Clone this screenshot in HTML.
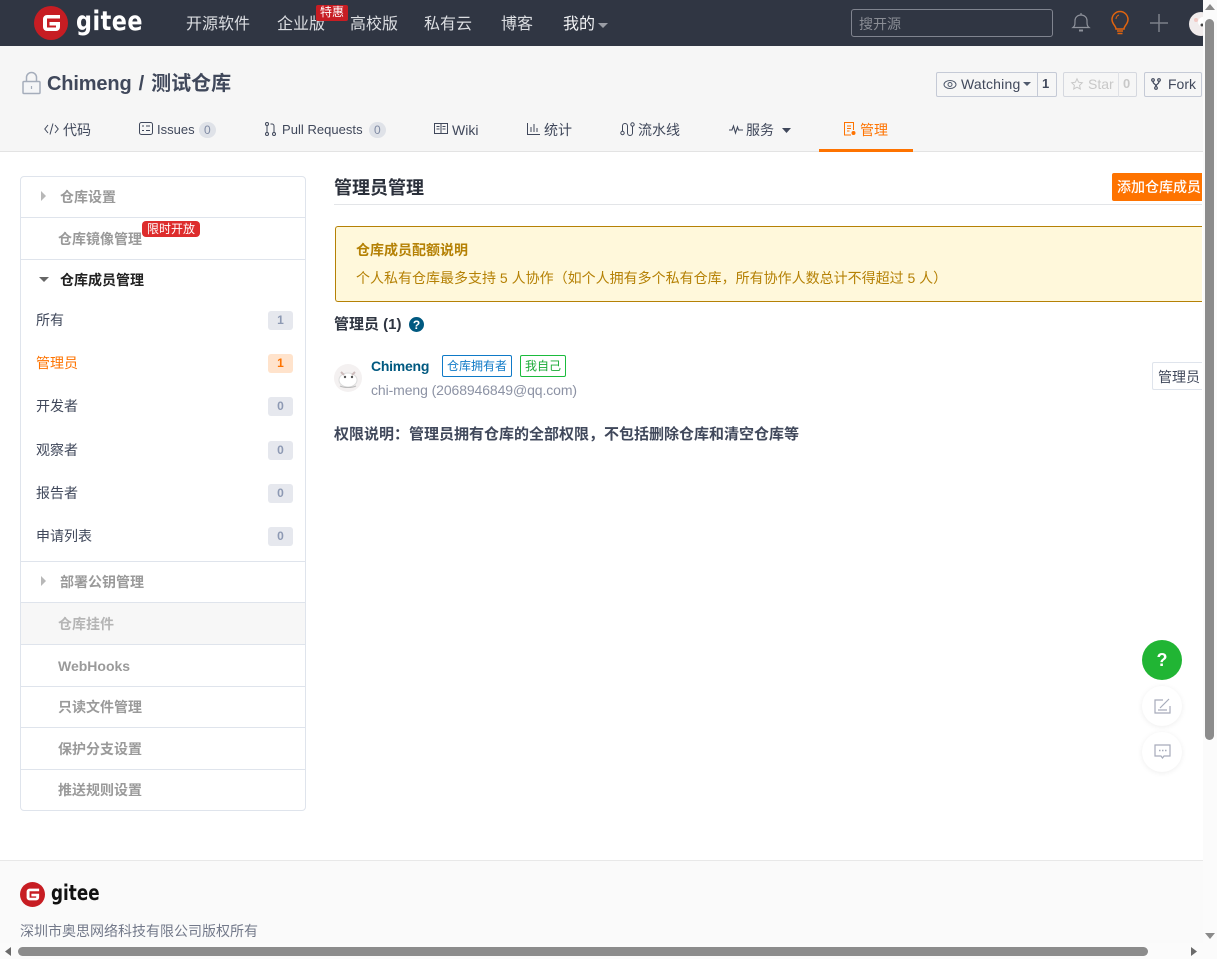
<!DOCTYPE html>
<html lang="zh"><head><meta charset="utf-8"><title>管理员管理</title>
<style>
html,body{margin:0;padding:0;width:1217px;height:959px;overflow:hidden;background:#fff}
body{position:relative;font-family:"Liberation Sans","Noto Sans CJK SC",sans-serif;font-size:14px;color:#40485b}
.a{position:absolute;white-space:nowrap}
.t{line-height:20px}
.nav{top:14px;font-size:16px;line-height:22px;color:#dcdee2}
.tab{top:120px;font-size:14px;line-height:20px;color:#40485b}
.cnt{display:inline-block;background:#dfe2e8;color:#7f8aa3;border-radius:9px;font-size:12px;line-height:16px;padding:0 5px}
.gr{color:#9a9a9a;font-weight:bold;font-size:14px;left:58px}
.row{left:21px;width:284px;height:1px;background:#dfe4ec}
.sub{left:36px;font-size:14px;color:#40485b}
.bd{left:268px;width:25px;height:19px;border-radius:3px;background:#e6e8ee;color:#8d99b3;font-weight:bold;font-size:12px;line-height:19px;text-align:center}
.btn{height:25px;top:72px;box-sizing:border-box;border:1px solid #c5cad6;border-radius:2px;line-height:23px;font-size:14px;background:#f6f6f6}
svg{position:absolute;overflow:visible}
</style></head><body>

<div class="a" style="left:0;top:0;width:1217px;height:46px;background:#303643"></div>
<div class="a" style="left:0;top:46px;width:1217px;height:105px;background:#f6f6f6;border-bottom:1px solid #e3e3e3;box-sizing:content-box"></div>

<!-- header logo -->
<svg style="left:34px;top:6px" width="34" height="34" viewBox="0 0 34 34"><circle cx="17" cy="17" r="17" fill="#c71d23"/><path d="M26 9H13a4 4 0 0 0-4 4v8a4 4 0 0 0 4 4h9a4 4 0 0 0 4-4v-5H15.500v3.500H22V21.500H13V12.500H26z" fill="#fff"/></svg>
<div class="a" style="left:76px;top:4px;font-size:27px;line-height:36px;font-weight:bold;color:#fff;letter-spacing:.6px;font-family:'DejaVu Sans',sans-serif;transform:scaleX(.825);transform-origin:0 0">gitee</div>

<div class="a nav" style="left:186px">开源软件</div>
<div class="a nav" style="left:277px">企业版</div>
<div class="a" style="left:316px;top:5px;width:32px;height:16px;background:#c71d23;border-radius:2px;color:#fff;font-size:12px;line-height:15px;text-align:center">特惠</div>
<div class="a nav" style="left:350px">高校版</div>
<div class="a nav" style="left:424px">私有云</div>
<div class="a nav" style="left:501px">博客</div>
<div class="a nav" style="left:563px;color:#f2f3f5">我的</div>
<svg style="left:598px;top:23px" width="10" height="5"><path d="M0 0h10L5 5z" fill="#9a9da5"/></svg>

<div class="a" style="left:851px;top:9px;width:202px;height:28px;box-sizing:border-box;border:1px solid #80848f;border-radius:3px;color:#8a8d95;font-size:14px;line-height:28px;padding-left:7px">搜开源</div>

<svg style="left:1071px;top:11px" width="20" height="24" fill="none" stroke="#8e929b" stroke-width="1.200"><path d="M2 16.500c2-1.500 2-3 2-7 0-3 2.500-5.500 6-5.500s6 2.500 6 5.500c0 4 0 5.500 2 7z"/><path d="M10 2v2"/><path d="M8 19.500h4" stroke-width="2"/></svg>
<svg style="left:1110px;top:11px" width="20" height="26" fill="none" stroke="#e0640f" stroke-width="1.500"><path d="M6 18c0-3-4-5-4-9.500a8 8 0 0 1 16 0C18 13 14 15 14 18z"/><path d="M7 20h6M7.500 22.500h5" stroke-width="1.500"/><path d="M6 8c0-2 1.500-3.500 3-4" stroke-width="1"/></svg>
<svg style="left:1150px;top:14px" width="18" height="18" stroke="#7c808a" stroke-width="1.500"><path d="M9 0v18M0 9h18"/></svg>
<svg style="left:1189px;top:12px" width="24" height="24"><circle cx="12" cy="12" r="12" fill="#f1ecec"/><circle cx="14" cy="10" r="5" fill="#fff"/><circle cx="13" cy="13" r="1.500" fill="#444"/><circle cx="7" cy="8" r="2" fill="#f2c9c4"/></svg>

<!-- repo title -->
<svg style="left:22px;top:72px" width="20" height="23" fill="none" stroke="#a5adbb" stroke-width="1.500"><rect x="1" y="9.500" width="17" height="12" rx="1" fill="#f4f5f7"/><path d="M4.500 9.500V5.500a5 5 0 0 1 10 0v4"/><path d="M9.500 14v3" stroke-width="1.200"/></svg>
<div class="a" style="left:47px;top:71px;font-size:20px;line-height:27px;font-weight:bold;color:#40485b;word-spacing:1.500px"><span style="letter-spacing:-.15px">Chimeng</span> / 测试仓库</div>

<!-- repo buttons -->
<div class="a btn" style="left:936px;width:121px"></div>
<div class="a" style="left:1037px;top:72px;width:1px;height:25px;background:#c5cad6"></div>
<svg style="left:943px;top:79px" width="14" height="11" fill="none" stroke="#505a6d" stroke-width="1"><ellipse cx="7" cy="5.500" rx="6" ry="4"/><circle cx="7" cy="5.500" r="2"/></svg>
<div class="a t" style="left:961px;top:74px;color:#40485b;letter-spacing:.2px">Watching</div>
<svg style="left:1023px;top:82px" width="8" height="4"><path d="M0 0h8L4 4z" fill="#505a6d"/></svg>
<div class="a t" style="left:1042px;top:74px;font-weight:bold;color:#40485b;font-size:13px">1</div>

<div class="a btn" style="left:1063px;width:74px;border-color:#d5d8df"></div>
<div class="a" style="left:1118px;top:72px;width:1px;height:25px;background:#dfe1e6"></div>
<svg style="left:1071px;top:78px" width="12" height="12" fill="none" stroke="#c8c8c8" stroke-width="1"><path d="M6 .8l1.600 3.400 3.700.5-2.700 2.600.7 3.700L6 9.200 2.700 11l.7-3.700L.7 4.700l3.700-.5z"/></svg>
<div class="a t" style="left:1088px;top:74px;color:#c8c8c8">Star</div>
<div class="a t" style="left:1123px;top:74px;font-weight:bold;color:#c8c8c8;font-size:13px">0</div>

<div class="a btn" style="left:1144px;width:58px"></div>
<svg style="left:1151px;top:78px" width="10" height="12" fill="none" stroke="#40485b" stroke-width="1.200"><circle cx="2" cy="2" r="1.300"/><circle cx="8" cy="2" r="1.300"/><circle cx="5" cy="10" r="1.300"/><path d="M2 3.500c0 3 3 2 3 5M8 3.500c0 3-3 2-3 5"/></svg>
<div class="a t" style="left:1168px;top:74px;color:#40485b">Fork</div>

<!-- tabs -->
<svg style="left:44px;top:123px" width="15" height="12" fill="none" stroke="#40485b" stroke-width="1"><path d="M4 2L.8 6 4 10M11 2l3.200 4L11 10M9 .5L6 11.500"/></svg>
<div class="a tab" style="left:63px">代码</div>
<svg style="left:139px;top:122px" width="14" height="13" fill="none" stroke="#40485b" stroke-width="1"><rect x=".5" y=".5" width="13" height="12" rx="2"/><path d="M3 4h2M7 4h4M3 8.500h2M7 8.500h4"/></svg>
<div class="a tab" style="left:157px;font-size:13px">Issues</div>
<div class="a cnt" style="left:199px;top:122px">0</div>
<svg style="left:265px;top:122px" width="11" height="14" fill="none" stroke="#40485b" stroke-width="1"><circle cx="2" cy="2" r="1.500"/><circle cx="2" cy="12" r="1.500"/><circle cx="9" cy="12" r="1.500"/><path d="M2 3.500v7M9 10.500V4a2 2 0 0 0-2-2H5.500"/></svg>
<div class="a tab" style="left:282px;font-size:13px;letter-spacing:.03px">Pull Requests</div>
<div class="a cnt" style="left:369px;top:122px">0</div>
<svg style="left:434px;top:123px" width="14" height="11" fill="none" stroke="#40485b" stroke-width="1"><rect x=".5" y=".5" width="13" height="10"/><path d="M7 .5v10M2.500 3.500h3M2.500 6h3M8.500 3.500h3M8.500 6h3" /></svg>
<div class="a tab" style="left:452px">Wiki</div>
<svg style="left:527px;top:123px" width="13" height="12" fill="none" stroke="#40485b" stroke-width="1"><path d="M.5 0v11.500H13M4 4v5M7 1v8M10 5v4"/></svg>
<div class="a tab" style="left:544px">统计</div>
<svg style="left:620px;top:122px" width="15" height="14" fill="none" stroke="#40485b" stroke-width="1"><circle cx="2.500" cy="11" r="1.700"/><circle cx="12.500" cy="2.500" r="1.700"/><path d="M2.500 9V4a2.500 2.500 0 0 1 5 0v7a2.500 2.500 0 0 0 5 0V4.500"/></svg>
<div class="a tab" style="left:638px">流水线</div>
<svg style="left:729px;top:125px" width="14" height="9" fill="none" stroke="#40485b" stroke-width="1.100"><path d="M0 5h3l1.500-4 2 7 2-6 1 3H14"/></svg>
<div class="a tab" style="left:746px">服务</div>
<svg style="left:782px;top:128px" width="9" height="5"><path d="M0 0h9L4.500 5z" fill="#40485b"/></svg>
<svg style="left:844px;top:122px" width="12" height="14" fill="none" stroke="#fe7300" stroke-width="1"><path d="M7 13H.5V.5h9V8"/><path d="M3 4h4M3 6.500h4M3 9h2.500"/><circle cx="9.500" cy="11" r="1.500" fill="#fe7300"/></svg>
<div class="a tab" style="left:860px;color:#fe7300">管理</div>
<div class="a" style="left:819px;top:149px;width:94px;height:3px;background:#fe7300"></div>

<!-- sidebar -->
<div class="a" style="left:20px;top:176px;width:286px;height:635px;box-sizing:border-box;border:1px solid #dfe4ec;border-radius:4px;background:#fff"></div>
<div class="a" style="left:21px;top:603px;width:284px;height:41px;background:#f7f7f7"></div>
<svg style="left:41px;top:191px" width="5" height="10"><path d="M0 0l5 5-5 5z" fill="#b8b8b8"/></svg>
<div class="a t gr" style="left:60px;top:187px">仓库设置</div>
<div class="a row" style="top:217px"></div>
<div class="a t gr" style="top:229px">仓库镜像管理</div>
<div class="a" style="left:142px;top:221px;width:58px;height:16px;background:#dd2c2c;border-radius:4px;color:#fff;font-size:12px;line-height:16px;text-align:center">限时开放</div>
<div class="a row" style="top:259px"></div>
<svg style="left:39px;top:277px" width="10" height="5"><path d="M0 0h10L5 5z" fill="#666"/></svg>
<div class="a t" style="left:60px;top:270px;font-weight:bold;font-size:14px;color:#222">仓库成员管理</div>

<div class="a t sub" style="top:310px">所有</div><div class="a bd" style="top:311px">1</div>
<div class="a t sub" style="top:353px;color:#fe7300">管理员</div><div class="a bd" style="top:354px;background:#ffe3cc;color:#fe7300">1</div>
<div class="a t sub" style="top:396px">开发者</div><div class="a bd" style="top:397px">0</div>
<div class="a t sub" style="top:440px">观察者</div><div class="a bd" style="top:441px">0</div>
<div class="a t sub" style="top:483px">报告者</div><div class="a bd" style="top:484px">0</div>
<div class="a t sub" style="top:526px">申请列表</div><div class="a bd" style="top:527px">0</div>

<div class="a row" style="top:561px"></div>
<svg style="left:41px;top:576px" width="5" height="10"><path d="M0 0l5 5-5 5z" fill="#b8b8b8"/></svg>
<div class="a t gr" style="left:60px;top:572px">部署公钥管理</div>
<div class="a row" style="top:602px"></div>
<div class="a t gr" style="top:614px;color:#b5b5b5">仓库挂件</div>
<div class="a row" style="top:644px"></div>
<div class="a t gr" style="top:656px">WebHooks</div>
<div class="a row" style="top:686px"></div>
<div class="a t gr" style="top:697px">只读文件管理</div>
<div class="a row" style="top:727px"></div>
<div class="a t gr" style="top:739px">保护分支设置</div>
<div class="a row" style="top:769px"></div>
<div class="a t gr" style="top:780px">推送规则设置</div>

<!-- main -->
<div class="a" style="left:334px;top:176px;font-size:18px;line-height:25px;font-weight:bold;color:#2a2f3a">管理员管理</div>
<div class="a" style="left:334px;top:204px;width:868px;height:1px;background:#e3e5e8"></div>
<div class="a" style="left:1112px;top:173px;width:90px;height:28px;background:#fe7300;border-radius:2px 0 0 2px"></div>
<div class="a" style="left:1117px;top:173px;color:#fff;font-size:14px;line-height:28px;font-weight:500">添加仓库成员</div>

<div class="a" style="left:335px;top:226px;width:867px;height:76px;box-sizing:border-box;border:1px solid #b58105;border-right:0;border-radius:3px 0 0 3px;background:#fff8db"></div>
<div class="a t" style="left:356px;top:240px;font-size:14px;font-weight:bold;color:#b58105">仓库成员配额说明</div>
<div class="a t" style="left:356px;top:268px;font-size:14px;color:#b58105">个人私有仓库最多支持 5 人协作（如个人拥有多个私有仓库，所有协作人数总计不得超过 5 人）</div>

<div class="a t" style="left:334px;top:315px;font-size:15px;font-weight:bold;color:#2f3541">管理员 (1)</div>
<svg style="left:409px;top:317px" width="15" height="15"><circle cx="7.500" cy="7.500" r="7.500" fill="#005980"/><text x="7.500" y="12" text-anchor="middle" font-size="12" font-weight="bold" fill="#fff" font-family="Liberation Sans">?</text></svg>

<svg style="left:334px;top:364px" width="28" height="28"><circle cx="14" cy="14" r="14" fill="#f4f1f1"/><ellipse cx="14" cy="16" rx="9" ry="7" fill="#fff" stroke="#ddd"/><circle cx="11" cy="13" r="1.200" fill="#555"/><circle cx="18" cy="13" r="1.200" fill="#555"/><path d="M7 8l3 3M21 8l-3 3" stroke="#cbb" stroke-width="2"/><path d="M6 22c4 2 12 2 16 0" stroke="#bbb" fill="none"/></svg>
<div class="a t" style="left:371px;top:356px;font-size:14px;font-weight:bold;color:#005980;letter-spacing:-.25px">Chimeng</div>
<div class="a" style="left:442px;top:355px;width:70px;height:22px;box-sizing:border-box;border:1px solid #0f7ac7;border-radius:2px;color:#0f7ac7;font-size:12px;line-height:21px;text-align:center">仓库拥有者</div>
<div class="a" style="left:520px;top:355px;width:46px;height:22px;box-sizing:border-box;border:1px solid #1bbb3d;border-radius:2px;color:#1bab37;font-size:12px;line-height:21px;text-align:center">我自己</div>
<div class="a t" style="left:371px;top:380px;font-size:14px;color:#8c92a4;letter-spacing:-.1px">chi-meng (2068946849@qq.com)</div>
<div class="a" style="left:1152px;top:362px;width:50px;height:28px;box-sizing:border-box;border:1px solid #dfe4ec;border-right:0;border-radius:2px 0 0 2px;color:#40485b;font-size:14px;line-height:28px;padding-left:5px;background:#fff">管理员</div>

<div class="a t" style="left:334px;top:425px;font-size:15px;font-weight:bold;color:#40485b">权限说明：管理员拥有仓库的全部权限，不包括删除仓库和清空仓库等</div>

<!-- floating -->
<div class="a" style="left:1142px;top:640px;width:40px;height:40px;border-radius:50%;background:#21b534;color:#fff;font-size:18px;font-weight:bold;line-height:40px;text-align:center">?</div>
<div class="a" style="left:1142px;top:686px;width:40px;height:40px;border-radius:50%;background:#fff;box-shadow:0 1px 6px rgba(0,0,0,.07)"></div>
<svg style="left:1154px;top:698px" width="17" height="17" fill="none" stroke="#a6abba" stroke-width="1.200"><path d="M9 2H1v13h15V8"/><path d="M6 10l9-9M4 12h9" /></svg>
<div class="a" style="left:1142px;top:732px;width:40px;height:40px;border-radius:50%;background:#fff;box-shadow:0 1px 6px rgba(0,0,0,.07)"></div>
<svg style="left:1154px;top:744px" width="17" height="16" fill="none" stroke="#a6abba" stroke-width="1.200"><path d="M1 1h15v11h-6l-1.500 2L7 12H1z"/><path d="M5 6.500h1.500M8 6.500h1.500M11 6.500h1.500" stroke-width="1.400"/></svg>

<!-- footer -->
<div class="a" style="left:0;top:860px;width:1217px;height:99px;background:#fafafa;border-top:1px solid #e8e8e8;box-sizing:border-box"></div>
<svg style="left:20px;top:882px" width="25" height="25" viewBox="0 0 34 34"><circle cx="17" cy="17" r="17" fill="#c71d23"/><path d="M26 9H13a4 4 0 0 0-4 4v8a4 4 0 0 0 4 4h9a4 4 0 0 0 4-4v-5H15.500v3.500H22V21.500H13V12.500H26z" fill="#fff"/></svg>
<div class="a" style="left:51px;top:879px;font-size:21px;line-height:28px;font-weight:bold;color:#111;font-family:'DejaVu Sans',sans-serif;transform:scaleX(.8);transform-origin:0 0">gitee</div>
<div class="a t" style="left:20px;top:921px;font-size:14px;color:#73798a">深圳市奥思网络科技有限公司版权所有</div>

<!-- scrollbars -->
<div class="a" style="left:1203px;top:0;width:14px;height:943px;background:#fbfbfb"></div>
<svg style="left:1205px;top:4px" width="10" height="6"><path d="M5 0l5 6H0z" fill="#8a8a8a"/></svg>
<div class="a" style="left:1205px;top:19px;width:9px;height:721px;background:#8c8c8c;border-radius:5px"></div>
<svg style="left:1205px;top:933px" width="10" height="6"><path d="M0 0h10L5 6z" fill="#8a8a8a"/></svg>
<div class="a" style="left:0;top:943px;width:1217px;height:16px;background:#fbfbfb"></div>
<svg style="left:5px;top:947px" width="6" height="9"><path d="M6 0v9L0 4.500z" fill="#6b6b6b"/></svg>
<div class="a" style="left:18px;top:947px;width:1130px;height:9px;background:#8c8c8c;border-radius:5px"></div>
<svg style="left:1191px;top:947px" width="6" height="9"><path d="M0 0v9l6-4.500z" fill="#6b6b6b"/></svg>
</body></html>
